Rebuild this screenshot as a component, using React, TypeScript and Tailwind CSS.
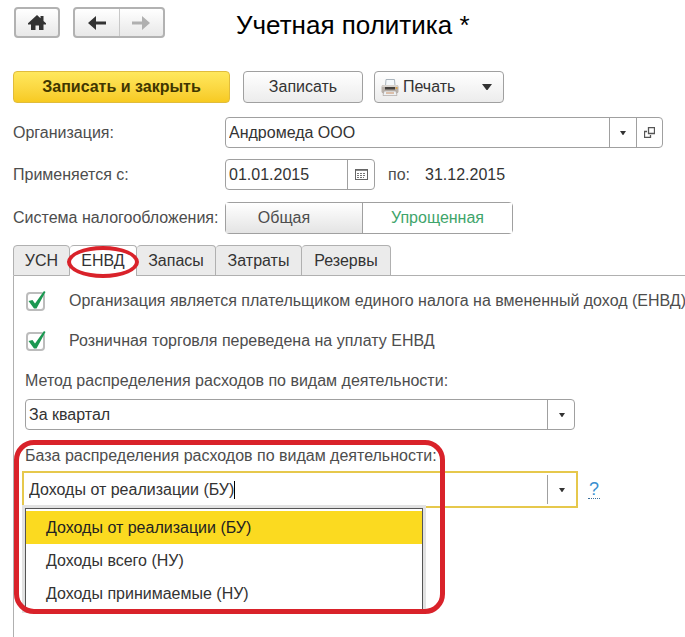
import React, { useState } from 'react';

interface CheckRowProps {
  id: string;
  label: string;
}

const Caret: React.FC<{ big?: boolean }> = ({ big = false }) => (
  <svg
    viewBox="0 0 10 6"
    className={big ? 'w-[10px] h-[6px]' : 'w-[6px] h-[4px]'}
    preserveAspectRatio="none"
    aria-hidden="true"
  >
    <path d="M0 0h10L5.5 6h-1z" fill="#333333" />
  </svg>
);

const CheckRow: React.FC<CheckRowProps> = ({ id, label }) => {
  const [checked, setChecked] = useState(true);

  return (
    <div className="flex items-center h-10">
      <span className="grid shrink-0 w-[43px]">
        <input
          id={id}
          type="checkbox"
          checked={checked}
          onChange={(e) => setChecked(e.target.checked)}
          className="col-start-1 row-start-1 appearance-none size-[19px] border-2 border-[#bcbcbc] rounded-sm bg-white"
        />
        {checked && (
          <svg
            viewBox="0 0 19 19"
            className="col-start-1 row-start-1 size-[19px] overflow-visible pointer-events-none"
            aria-hidden="true"
          >
            <path d="M2.5 9 6.5 8 9 11.5 18 -1 19.5 0 10.5 16.5 8 16.5z" fill="#1a9850" />
          </svg>
        )}
      </span>
      <label htmlFor={id} className="text-[#4d4d4d] whitespace-nowrap">
        {label}
      </label>
    </div>
  );
};

const tabs = [
  { name: 'УСН', width: 'w-[57px]' },
  { name: 'ЕНВД', width: 'w-[67px]' },
  { name: 'Запасы', width: 'w-[79px]' },
  { name: 'Затраты', width: 'w-[86px]' },
  { name: 'Резервы', width: 'w-[89px]' },
];

const bases = [
  'Доходы от реализации (БУ)',
  'Доходы всего (НУ)',
  'Доходы принимаемые (НУ)',
];

const systems = [
  { name: 'Общая', width: 'w-[137px] pr-5' },
  { name: 'Упрощенная', width: 'w-[149px]' },
];

const Toolbar: React.FC = () => (
  <>
    <header className="flex items-center h-[31px]">
      <button
        type="button"
        aria-label="Домой"
        className="ml-px w-[46px] h-full flex items-center justify-center border-2 border-[#b2b2b2] rounded bg-gradient-to-b from-white to-[#e8e8e8]"
      >
        <svg viewBox="0 0 18 15" className="w-[18px] h-[15px]" aria-hidden="true">
          <path
            d="M9 0 12.5 3.2V1H15.5v5L18 8.3V9.5H15.5V15H11V10.5H7.5V15H3V9.5H0V8.3z"
            fill="#333333"
          />
        </svg>
      </button>
      <div className="ml-[13px] flex h-full w-[92px] border-2 border-[#b2b2b2] rounded bg-gradient-to-b from-white to-[#e8e8e8]">
        <button
          type="button"
          aria-label="Назад"
          className="flex-1 flex items-center justify-center border-r border-[#c8c8c8]"
        >
          <svg viewBox="0 0 18 14" className="w-[18px] h-[14px]" aria-hidden="true">
            <path d="M0 7 8 0V5.5H18V8.5H8V14z" fill="#333333" />
          </svg>
        </button>
        <button type="button" aria-label="Вперед" className="flex-1 flex items-center justify-center">
          <svg viewBox="0 0 18 14" className="w-[18px] h-[14px]" aria-hidden="true">
            <path d="M18 7 10 0V5.5H0V8.5H10V14z" fill="#b0b0b0" />
          </svg>
        </button>
      </div>
      <h1 className="ml-[71px] pt-1 text-[26px] leading-8 text-black whitespace-nowrap">
        Учетная политика *
      </h1>
    </header>

    <div className="mt-[33px] flex h-8">
      <button
        type="button"
        className="w-[217px] border border-[#e0bc3c] rounded-sm bg-gradient-to-b from-[#ffe85c] to-[#f7ca20] font-bold text-[#403600]"
      >
        Записать и закрыть
      </button>
      <button
        type="button"
        className="ml-[13px] w-[120px] border border-[#a0a0a0] rounded-sm bg-gradient-to-b from-white to-[#ececec]"
      >
        Записать
      </button>
      <button
        type="button"
        className="ml-[11px] w-[130px] flex items-center pl-[6px] pr-[11px] border border-[#a0a0a0] rounded-sm bg-gradient-to-b from-white to-[#ececec]"
      >
        <svg viewBox="0 0 18 17" className="w-[18px] h-[17px]" aria-hidden="true">
          <path d="M4.5 7 5 .5h8.5L14 7z" fill="#f4f8fb" stroke="#aab4bc" />
          <rect x="0.5" y="6" width="17" height="8.5" rx="2" fill="#b9b1aa" />
          <path d="M1 8q0-2 2-2h12q2 0 2 2z" fill="#d9d4cf" />
          <path d="M4 8h10v2.5H4z" fill="#44403d" />
          <circle cx="15.5" cy="9" r="1" fill="#e0a040" />
          <path d="M3 12h12l1 4.5H2z" fill="#eef1f3" stroke="#a39b95" strokeWidth=".6" />
          <path d="M5 14h8" stroke="#c88d62" />
        </svg>
        <span className="ml-1 mr-auto">Печать</span>
        <Caret big />
      </button>
    </div>
  </>
);

const PolicyFields: React.FC = () => {
  const [system, setSystem] = useState('Упрощенная');

  return (
    <>
      <div className="mt-[14px] flex items-center h-[31px]">
        <label htmlFor="org" className="w-[212px] shrink-0 text-[#4d4d4d]">
          Организация:
        </label>
        <div className="flex-1 min-w-0 h-full flex border border-[#a0a0a0] rounded-sm divide-x divide-[#a0a0a0]">
          <input
            id="org"
            type="text"
            defaultValue="Андромеда ООО"
            className="flex-1 min-w-0 px-[3px] outline-none"
          />
          <button type="button" aria-label="Выбрать" className="w-[27px] flex items-center justify-center">
            <Caret />
          </button>
          <button type="button" aria-label="Открыть" className="w-[25px] flex items-center justify-center">
            <svg viewBox="0 0 11 11" className="size-[11px]" fill="none" stroke="#555555" aria-hidden="true">
              <path d="M4.5.5h6v6h-6zM3 4.5H.5v6h6V8" strokeWidth="1.3" />
            </svg>
          </button>
        </div>
      </div>

      <div className="mt-[11px] flex items-center h-[31px]">
        <label htmlFor="from" className="w-[212px] shrink-0 text-[#4d4d4d]">
          Применяется с:
        </label>
        <div className="w-[150px] h-full flex border border-[#a0a0a0] rounded-sm divide-x divide-[#a0a0a0]">
          <input
            id="from"
            type="text"
            defaultValue="01.01.2015"
            className="flex-1 min-w-0 px-[3px] outline-none"
          />
          <button type="button" aria-label="Календарь" className="w-[26px] flex items-center justify-center">
            <svg viewBox="0 0 13 11" className="w-[13px] h-[11px]" aria-hidden="true">
              <rect x=".5" y=".5" width="12" height="10" fill="#ffffff" stroke="#666666" />
              <path d="M1 1.5h11" stroke="#888888" />
              <path d="M2 4.5h9M2 6.5h9M2 8.5h7" stroke="#777777" strokeDasharray="2 1" />
            </svg>
          </button>
        </div>
        <span className="ml-[13px] w-[37px] text-[#4d4d4d]">по:</span>
        <span>31.12.2015</span>
      </div>

      <div
        role="radiogroup"
        aria-labelledby="system-label"
        className="mt-3 flex items-center h-8"
      >
        <span id="system-label" className="w-[212px] shrink-0 whitespace-nowrap text-[#4d4d4d]">
          Система налогообложения:
        </span>
        <div className="h-full flex border border-[#a0a0a0] rounded-sm divide-x divide-[#a0a0a0]">
          {systems.map(({ name, width }) => (
            <label
              key={name}
              className={`${width} flex items-center justify-center ${
                system === name
                  ? 'bg-white text-[#3fa56b]'
                  : 'bg-gradient-to-b from-white to-[#e4e4e4] text-[#4d4d4d]'
              }`}
            >
              <input
                type="radio"
                name="system"
                value={name}
                checked={system === name}
                onChange={() => setSystem(name)}
                className="sr-only"
              />
              {name}
            </label>
          ))}
        </div>
      </div>
    </>
  );
};

const TabBar: React.FC = () => {
  const [active, setActive] = useState('ЕНВД');

  return (
    <div role="tablist" className="mt-[11px] flex h-[31px]">
      {tabs.map(({ name, width }, index) => (
        <button
          key={name}
          type="button"
          role="tab"
          aria-selected={active === name}
          onClick={() => setActive(name)}
          className={`relative ${width} border-t border-r border-[#b0b0b0] rounded-t-sm ${
            index === 0 ? 'border-l' : ''
          } ${active === name ? 'bg-white' : 'bg-[#ebebeb] border-b'}`}
        >
          {name}
          {name === 'ЕНВД' && (
            <span className="absolute z-10 -inset-x-[3px] top-0 -bottom-[2px] border-4 border-[#d9222a] rounded-[50%] pointer-events-none" />
          )}
        </button>
      ))}
      <div className="flex-1 border-b border-[#b0b0b0]" />
    </div>
  );
};

const BasePicker: React.FC = () => {
  const [base, setBase] = useState(bases[0]);

  return (
    <div className="relative mt-[15px]">
      <label htmlFor="base" className="block leading-[22px] text-[#4d4d4d]">
        База распределения расходов по видам деятельности:
      </label>
      <div className="-ml-[3px] mt-1 flex items-center">
        <div className="w-full max-w-[556px] h-[37px] flex items-center border-2 border-[#e6c84c]">
          <input
            id="base"
            type="text"
            role="combobox"
            aria-expanded="true"
            aria-controls="base-list"
            value={base}
            onChange={(e) => setBase(e.target.value)}
            className="[field-sizing:content] pl-[5px] outline-none caret-transparent"
          />
          <span className="w-px h-[18px] bg-black" />
          <button
            type="button"
            aria-label="Выбрать базу"
            className="ml-auto w-[29px] h-[29px] flex items-center justify-center border-l border-[#a0a0a0]"
          >
            <Caret />
          </button>
        </div>
        <a
          href="#help"
          className="ml-[10px] px-[1px] leading-[18px] text-[18px] text-[#3b8fd0] border-b border-dotted border-[#3b6f9c]"
        >
          ?
        </a>
      </div>

      <ul
        id="base-list"
        role="listbox"
        className="absolute left-0 top-[63px] w-[398px] pt-[2px] bg-white border border-b-0 border-[#555555] shadow-[0_0_0_3px_#e2e2e2]"
      >
        {bases.map((item, index) => (
          <li
            key={item}
            role="option"
            aria-selected={index === 0}
            onClick={() => setBase(item)}
            className={`h-[33px] pl-5 flex items-center ${
              index === 0 ? 'bg-[#fbda20] text-[#222222]' : 'text-[#333333]'
            }`}
          >
            {item}
          </li>
        ))}
      </ul>

      <div className="absolute -left-[11px] -top-[5px] w-[431px] h-[174px] border-5 border-[#d9222a] rounded-[20px] pointer-events-none" />
    </div>
  );
};

export default function App() {
  return (
    <main className="min-h-screen flex flex-col pl-[13px] pt-[7px] bg-white text-[16px] leading-[22px] text-[#333333] font-['Liberation_Sans',Arial,sans-serif]">
      <div className="pr-[22px]">
        <Toolbar />
        <PolicyFields />
      </div>
      <TabBar />
      <section role="tabpanel" className="flex-1 pl-[11px] pt-[5px] pb-5 border-l border-[#b0b0b0]">
        <div className="pl-px">
          <CheckRow
            id="payer"
            label="Организация является плательщиком единого налога на вмененный доход (ЕНВД)"
          />
          <CheckRow id="retail" label="Розничная торговля переведена на уплату ЕНВД" />
        </div>

        <label htmlFor="method" className="mt-[9px] block leading-[22px] text-[#4d4d4d]">
          Метод распределения расходов по видам деятельности:
        </label>
        <div className="mt-[7px] grid w-full max-w-[550px] h-[31px]">
          <select
            id="method"
            className="col-start-1 row-start-1 appearance-none px-[3px] border border-[#a0a0a0] rounded-sm bg-white outline-none"
          >
            <option>За квартал</option>
          </select>
          <span className="col-start-1 row-start-1 justify-self-end w-7 flex items-center justify-center border-l border-[#a0a0a0] pointer-events-none">
            <Caret />
          </span>
        </div>

        <BasePicker />
      </section>
    </main>
  );
}
